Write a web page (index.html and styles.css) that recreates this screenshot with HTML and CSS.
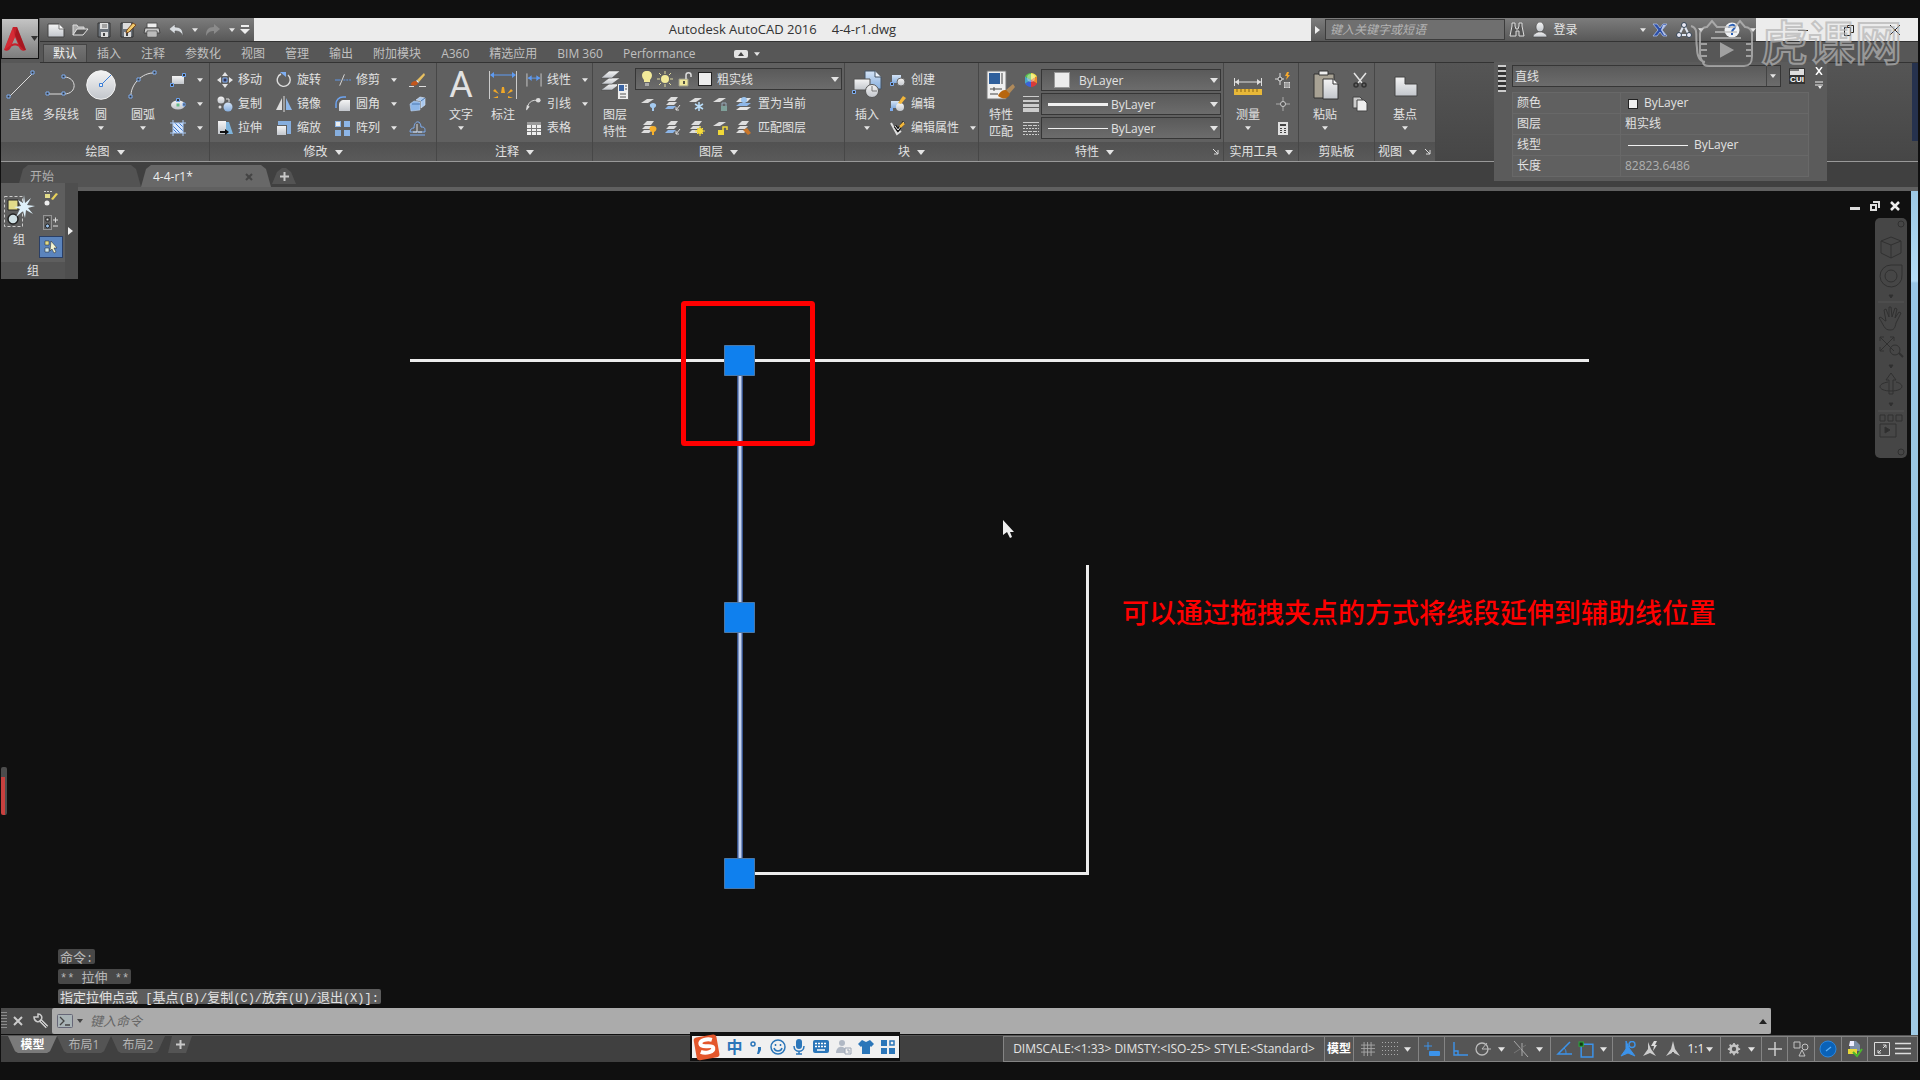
FILE: index.html
```html
<!DOCTYPE html>
<html lang="zh-CN">
<head>
<meta charset="utf-8">
<title>Autodesk AutoCAD 2016 - 4-4-r1.dwg</title>
<link rel="stylesheet" href="styles.css">
</head>
<body>
<svg class="sprite" aria-hidden="true">
  <defs>
    <linearGradient id="gl" x1="0" y1="0" x2="0" y2="1"><stop offset="0" stop-color="#f4f4f4"/><stop offset="1" stop-color="#c2c6cc"/></linearGradient>
    <linearGradient id="gb" x1="0" y1="0" x2="0" y2="1"><stop offset="0" stop-color="#d5e4f6"/><stop offset="1" stop-color="#86aede"/></linearGradient>
  </defs>
  <symbol id="down" viewBox="0 0 8 5"><path d="M0 0h8L4 5z" fill="#e4e4e4"/></symbol>
  <symbol id="new" viewBox="0 0 18 16"><path d="M1 2h11l5 5v8H1z" fill="url(#gl)" stroke="#444"/><path d="M12 2v5h5" fill="#fff" stroke="#777"/></symbol>
  <symbol id="open" viewBox="0 0 18 16"><path d="M2 13V3h4l1 2h6v3" fill="#aaa" stroke="#ddd"/><path d="M2 13 6 7h11l-5 6z" fill="#555" stroke="#e4e4e4"/></symbol>
  <symbol id="save" viewBox="0 0 16 16"><path d="M2 1h12v14H2z" fill="#6d747c" stroke="#333"/><path d="M4 1h8v6H4zM5 10h7v5H5z" fill="#ddd"/><path d="M6 3h5M6 5h5" stroke="#666"/><path d="M7 11h2v3H7z" fill="#444"/></symbol>
  <symbol id="saveas" viewBox="0 0 18 16"><path d="M2 1h12v14H2z" fill="#6d747c" stroke="#333"/><path d="M4 1h8v6H4zM5 10h7v5H5z" fill="#ddd"/><path d="M7 11h2v3H7z" fill="#444"/><path d="m7 11 1-3 6-7 3 2-7 7z" fill="#f0c96a" stroke="#7a4a20"/></symbol>
  <symbol id="print" viewBox="0 0 18 16"><path d="M4 1h10v5H4z" fill="#eee" stroke="#555"/><path d="M2 6h14l1 5H1z" fill="#c8c8c8" stroke="#444"/><path d="M4 9h10v6H4z" fill="#eee" stroke="#555"/><path d="M5 11h8M5 13h8" stroke="#888"/></symbol>
  <symbol id="undo" viewBox="0 0 16 14"><path d="m1 6 6-5v3c6 0 8 3 8 9-2-4-4-5-8-5v3z" fill="#d8dce0" stroke="#555" stroke-width=".6"/></symbol>
  <symbol id="redo" viewBox="0 0 16 14"><path d="M15 6 9 1v3C3 4 1 7 1 13c2-4 4-5 8-5v3z" fill="#8b8b8b"/></symbol>
  <symbol id="qcust" viewBox="0 0 10 9"><path d="M1 0h8v2H1zM0 4h10L5 9z" fill="#eee"/></symbol>
  <symbol id="applogo" viewBox="0 0 24 26"><path d="M1 24 10 1h4l9 23c-3 2-6 0-7-3-2-2-6-2-8 0-1 3-4 5-7 3z" fill="#c5202b"/><path d="M12 11l3 7c-2-1-4-1-6 0z" fill="#9a9a9a"/><path d="m10 1 2 10-4 8-7 5z" fill="#e0343c" opacity=".6"/><path d="m14 1-2 8 5 11 4 4 2 0z" fill="#8e1018" opacity=".55"/></symbol>
  <symbol id="bino" viewBox="0 0 16 16"><path d="M1 14 3 4V1h3v3l1 3h2l1-3V1h3v3l2 10h-5V9H7v5z" fill="#555" stroke="#ddd"/></symbol>
  <symbol id="user" viewBox="0 0 16 16"><ellipse cx="8" cy="5" rx="4" ry="5" fill="url(#gl)" stroke="#444" stroke-width=".6"/><path d="M1 15c0-3 3-4 5-5h4c2 1 5 2 5 5z" fill="url(#gl)" stroke="#444" stroke-width=".6"/></symbol>
  <symbol id="xch" viewBox="0 0 16 16"><path d="M1 2h4l3 4 3-4h4l-5 6 5 6h-4l-3-4-3 4H1l5-6z" fill="#2c4fa8" stroke="#a9bce8" stroke-width=".8"/><path d="M11 3h3l-4 5 4 5h-2L9 8z" fill="#b9c8ec"/></symbol>
  <symbol id="a360" viewBox="0 0 16 16"><path d="M8 3 3 13h10z" fill="none" stroke="#dfe6f2" stroke-width="2"/><circle cx="8" cy="3" r="2.500" fill="#e8e8f4" stroke="#345"/><circle cx="3" cy="13" r="2.500" fill="#e8e8f4" stroke="#345"/><circle cx="13" cy="13" r="2.500" fill="#e8e8f4" stroke="#345"/></symbol>
  <symbol id="help" viewBox="0 0 16 16"><circle cx="8" cy="8" r="7.500" fill="#f0f2f5"/><path d="M5 6c0-4 6-4 6-1 0 2-3 2-3 5" fill="none" stroke="#2a5fb4" stroke-width="2"/><path d="M7 11h2v2H7z" fill="#2a5fb4"/></symbol>
  <symbol id="line" viewBox="0 0 30 30"><path d="M3 27 27 3" stroke="#ddd"/><g fill="#333" stroke="#7eaef2"><path d="M1 25h3v3H1zM25 1h3v3h-3z"/></g></symbol>
  <symbol id="pline" viewBox="0 0 32 30"><path d="M3 24h16c14 0 13-17 0-17" fill="none" stroke="#ddd"/><g fill="#333" stroke="#7eaef2"><path d="M1 22h3v3H1zM17 22h3v3h-3zM17 5h3v3h-3z"/></g></symbol>
  <symbol id="circle" viewBox="0 0 30 30"><circle cx="15" cy="15" r="14.300" fill="url(#gl)" stroke="#f2f2f2"/><path d="M15 15 25 5" stroke="#3c7fd8"/><path d="M13.500 13.500h3v3h-3z" fill="#eee" stroke="#3c7fd8"/></symbol>
  <symbol id="arc" viewBox="0 0 30 30"><path d="M3 27C2 15 14 2 27 3" fill="none" stroke="#ddd"/><g fill="#333" stroke="#7eaef2"><path d="M1 25h3v3H1zM9 8h3v3H9zM25 1h3v3h-3z"/></g></symbol>
  <symbol id="rect" viewBox="0 0 16 16"><path d="M2 4h12v8H2z" fill="url(#gl)"/><g fill="#333" stroke="#6ea4f0"><path d="M.5 11.500h3v3h-3zM12.500 1.500h3v3h-3z"/></g></symbol>
  <symbol id="ellipse" viewBox="0 0 16 16"><ellipse cx="8" cy="9" rx="7" ry="4.500" fill="url(#gl)"/><path d="M6.500 7.500h3v3h-3z" fill="#6b8"/><g fill="#333" stroke="#6ea4f0"><path d="M6.500 2.500h3v3h-3zM13 7h2v3h-2z"/></g></symbol>
  <symbol id="hatch" viewBox="0 0 16 16"><path d="M3 3h10v10H3z" fill="#d8e6fa"/><path d="m3 6 7 7M3 9l4 4M5 3l8 8M9 3l4 4" stroke="#3c78d0"/><path d="M0 3h16M0 13h16M3 0v16M13 0v16" stroke="#a8c8f4"/></symbol>
  <symbol id="move" viewBox="0 0 16 16"><path d="m8 0 3 4H5zM8 16l3-4H5zM0 8l4-3v6zM16 8l-4-3v6z" fill="#e4e4e4"/><path d="M6 6h4v4H6z" fill="#335" stroke="#7eaef2"/></symbol>
  <symbol id="rotate" viewBox="0 0 16 16"><path d="M12 3a6.500 6.500 0 1 1-7-1" fill="none" stroke="#ddd" stroke-width="1.400"/><path d="M4 0h6v5z" fill="#7eaef2"/></symbol>
  <symbol id="trim" viewBox="0 0 17 16"><path d="M0 8h6" stroke="#5e9bf2"/><path d="M9 8h8" stroke="#5e9bf2" stroke-dasharray="2 1"/><path d="M5 14 10 2" stroke="#ddd"/></symbol>
  <symbol id="erase" viewBox="0 0 17 16"><path d="m8 8 7-7 1 2-6 7z" fill="#e8c060"/><path d="m8 8 2 2-1 1-2-2z" fill="#eee"/><path d="M2 13c0-3 2-4 5-4l2 2c-1 3-4 3-7 2z" fill="#c4571c"/><path d="M0 14.500h5M10 14.500h7" stroke="#ddd"/></symbol>
  <symbol id="copy" viewBox="0 0 16 16"><circle cx="4" cy="4" r="3.500" fill="url(#gl)"/><circle cx="11" cy="11" r="4.500" fill="url(#gb)"/><circle cx="3" cy="11" r="1.500" fill="#ddd"/><path d="M9 3h3v3" fill="none" stroke="#ddd"/></symbol>
  <symbol id="mirror" viewBox="0 0 16 16"><path d="M6 2v12H0z" fill="#ddd"/><path d="M10 2v12h6z" fill="#8db6e8"/><path d="M8 0v16" stroke="#ddd"/></symbol>
  <symbol id="fillet" viewBox="0 0 16 16"><path d="M4 15V9c0-3 2-5 5-5h6v11z" fill="url(#gl)"/><path d="M1 12V8c0-4 3-7 7-7h3" fill="none" stroke="#6ea4f0" stroke-width="1.500"/></symbol>
  <symbol id="explode" viewBox="0 0 17 16"><path d="m1 8 4-3 6 1v8l-9 1z" fill="#8db6e8" stroke="#bcd4f2" stroke-width=".6"/><path d="m7 4 4-3 5 1v7l-4 3V5z" fill="#a9c8ee" stroke="#dce8f8" stroke-width=".6"/><path d="M3 8h8M12 5l4-3" stroke="#4c78b0"/></symbol>
  <symbol id="stretch" viewBox="0 0 16 16"><path d="M1 1h8v13H1z" fill="url(#gl)"/><path d="M9 2h3l4 12H9z" fill="#7fb4dc"/><path d="M3 11h5V9l4 3-4 3v-2H3z" fill="#111"/></symbol>
  <symbol id="scale" viewBox="0 0 16 16"><path d="M2 1h13v13h-4V5H2z" fill="#86aede"/><path d="M1 6h9v9H1z" fill="url(#gl)"/></symbol>
  <symbol id="array" viewBox="0 0 16 16"><path d="M0 1h6v6H0zM9 1h6v6H9zM9 10h6v6H9z" fill="#8db6e8"/><path d="M0 10h6v6H0z" fill="#86aede"/><path d="M1 2h4v4H1z" fill="#eee"/></symbol>
  <symbol id="offset" viewBox="0 0 17 16"><path d="M1 12c0-3 2-4 4-4 0-8 7-8 7-1 4 0 4 1 4 5z" fill="none" stroke="#7eaef2"/><path d="M4 12h4V4m1 8h4" fill="none" stroke="#ddd"/><path d="M1 15h15" stroke="#7eaef2"/></symbol>
  <symbol id="dim" viewBox="0 0 30 30"><path d="M1.500 1v28M28.500 1v28" stroke="#ccc"/><path d="M3 5h24" stroke="#5e9bf2"/><path d="m2 5 4-3v6zM28 5l-4-3v6z" fill="#5e9bf2"/><g fill="#f0a828"><path d="m14 17 2 0 1 6h-4zM5 21l2-2 4 5zM25 21l-2-2-4 5zM5 28l5-2v2zM25 28l-5-2v2z"/></g></symbol>
  <symbol id="linear" viewBox="0 0 17 16"><path d="M1 1v14M16 1v14" stroke="#ccc"/><path d="M2 6h13" stroke="#5e9bf2"/><path d="m2 6 4-3v6zM15 6l-4-3v6z" fill="#5e9bf2"/></symbol>
  <symbol id="leader" viewBox="0 0 17 16"><path d="M1 14C2 6 6 4 11 4" fill="none" stroke="#ddd"/><path d="M0 15 1 9l3 2z" fill="#ddd"/><circle cx="13" cy="4" r="2.500" fill="#ddd"/></symbol>
  <symbol id="table" viewBox="0 0 16 16"><path d="M1 2h14v13H1z" fill="#eee"/><path d="M1 2h14v3H1z" fill="#9a9a9a"/><path d="M1 8.500h14M1 11.500h14M5.500 5v10M10.500 5v10" stroke="#777"/></symbol>
  <symbol id="layerprop" viewBox="0 0 30 30"><g fill="url(#gl)" stroke="#444" stroke-width=".5"><path d="m1 20 8-6h11l-8 6z"/><path d="m1 14 8-6h11l-8 6z"/><path d="m1 8 8-7h11l-8 7z"/></g><path d="M17.500 13.500h11v16h-11z" fill="#eee" stroke="#666"/><path d="M19 15h5v6h-5z" fill="#3a64a4"/><path d="M25 16h2M25 19h2M20 24h6M20 27h6" stroke="#555"/></symbol>
  <symbol id="bulb" viewBox="0 0 10 16"><path d="M5 0c6 0 6 6 3 9v2H2V9C-1 6-1 0 5 0z" fill="#f2ea9a"/><path d="M3 12h4v3H3z" fill="#aaa"/></symbol>
  <symbol id="sun" viewBox="0 0 16 16"><circle cx="8" cy="8" r="4" fill="#f2ea9a"/><path d="M8 0v3M8 13v3M0 8h3M13 8h3M2 2l2 2M12 12l2 2M14 2l-2 2M4 12l-2 2" stroke="#e0dca0"/></symbol>
  <symbol id="unlock" viewBox="0 0 15 16"><path d="M1 8h9v7H1z" fill="#efe79a" stroke="#998"/><path d="M8 8V4c0-3 5-3 5 0v2" fill="none" stroke="#ddd" stroke-width="1.500"/><path d="M5 10h2v3H5z" fill="#554"/></symbol>
  <symbol id="ly1" viewBox="0 0 18 16"><path d="m1 7 6-4h7l-6 4z" fill="#ddd"/><path d="M13 7c4 0 4 4 1 5v3h-2v-3c-3-1-3-5 1-5z" fill="#a4caf0"/></symbol>
  <symbol id="ly2" viewBox="0 0 18 16"><g fill="#ddd"><path d="m3 5 4-4h7l-3 4zM2 9l3-3h8l-3 3z"/></g><path d="m1 13 3-3h8l-3 3z" fill="#8db6e8"/><path d="m16 9-4 5m0-3v3h3" fill="none" stroke="#ddd"/></symbol>
  <symbol id="ly3" viewBox="0 0 18 16"><path d="m1 6 6-4h7l-6 4z" fill="#ddd"/><path d="M11 6v9M7 8l8 5M15 8l-8 5" stroke="#b8dcf8" stroke-width="1.500"/></symbol>
  <symbol id="ly4" viewBox="0 0 18 16"><path d="m1 6 6-4h7l-6 4z" fill="#ddd"/><path d="M9 10h6v5H9z" fill="#7fa09a"/><path d="M10 10V7h4v3" fill="none" stroke="#9ab"/></symbol>
  <symbol id="ly5" viewBox="0 0 18 16"><g fill="#e4e4e4"><path d="m1 14 4-3h11l-4 3z"/><path d="m1 6 4-4h11l-4 4z"/></g><path d="m1 10 4-3h11l-4 3z" fill="#8db6e8"/><circle cx="9" cy="4" r="3" fill="#9cc4ee"/></symbol>
  <symbol id="ly6" viewBox="0 0 18 16"><g fill="#ddd"><path d="m3 5 4-4h7l-3 4zM2 9l3-3h8l-3 3zM1 13l3-3h8l-3 3z"/></g><path d="M13 6c5 0 4 5 1 6v3h-2v-3c-3-1-4-6 1-6z" fill="#f5b02c"/></symbol>
  <symbol id="ly7" viewBox="0 0 18 16"><g fill="#ddd"><path d="m3 5 4-4h7l-3 4zM2 9l3-3h8l-3 3zM1 13l3-3h8l-3 3z"/></g><circle cx="12" cy="11" r="3" fill="#f8dc38"/><path d="M12 6v10M7 11h10M9 8l6 6M15 8l-6 6" stroke="#f8dc38"/></symbol>
  <symbol id="ly8" viewBox="0 0 18 16"><path d="m1 6 6-4h7l-6 4z" fill="#ddd"/><path d="M6 10h6v5H6z" fill="#f0d838"/><path d="M11 10V7h4v3" fill="none" stroke="#f0d838" stroke-width="1.500"/></symbol>
  <symbol id="ly9" viewBox="0 0 18 16"><g fill="#ddd"><path d="m3 5 4-4h7l-3 4zM2 9l3-3h8l-3 3zM1 13l3-3h8l-3 3z"/></g><path d="m8 10 4-2 4 5-3 2z" fill="#c8762a"/></symbol>
  <symbol id="insert" viewBox="0 0 30 30"><path d="M13 1h10l6 6v12H13z" fill="url(#gb)" stroke="#456"/><path d="M23 1v6h6" fill="#eef4fc" stroke="#456"/><path d="M2 9h16v11H2z" fill="url(#gl)" stroke="#555"/><circle cx="20" cy="21" r="6.500" fill="url(#gl)" stroke="#555"/><path d="M20 16v5h5" fill="none" stroke="#777"/><path d="M.500 20.500h3v3h-3z" fill="#333" stroke="#7eaef2"/></symbol>
  <symbol id="bcreate" viewBox="0 0 16 16"><path d="M2 3h9v8H2z" fill="url(#gb)"/><circle cx="11" cy="10" r="4" fill="url(#gl)" stroke="#666"/><path d="M.500 10.500h3v3h-3z" fill="#333" stroke="#7eaef2"/></symbol>
  <symbol id="bedit" viewBox="0 0 16 16"><path d="M1 5h8v7H1z" fill="url(#gb)"/><circle cx="10" cy="11" r="4" fill="url(#gl)"/><path d="m8 7 5-7 3 2-5 6z" fill="#f2b63a"/><path d="M0 12h3v3H0z" fill="#7eaef2"/></symbol>
  <symbol id="battr" viewBox="0 0 16 16"><path d="m1 3 6 11 4-3" fill="none" stroke="#ddd" stroke-width="2"/><path d="m5 6 3 4 6-8" fill="none" stroke="#111" stroke-width="3"/><path d="m5 6 3 4 6-8" fill="none" stroke="#eee"/><path d="m9 6 4-4 2 2-4 4z" fill="#f2b63a"/></symbol>
  <symbol id="matchp" viewBox="0 0 30 30"><path d="M1 1h19v28H1z" fill="#f0f0f0" stroke="#777"/><path d="M3 3h11v11H3z" fill="#2f5f9c"/><path d="M16 3v11M4 19h12M4 24h8M8 17v4" stroke="#444"/><path d="m20 20 7-6 2 3-6 7z" fill="#b08a5a"/><path d="M12 26c2-5 5-6 8-6l4 4c-2 5-7 6-12 2z" fill="#b8660e"/></symbol>
  <symbol id="wheel" viewBox="0 0 16 16"><g><path d="M8 8V1a7 7 0 0 1 6 3.500z" fill="#f0e24a"/><path d="m8 8 6-3.500v7z" fill="#f08a2c"/><path d="m8 8 6 3.500A7 7 0 0 1 8 15z" fill="#d83a3a"/><path d="M8 8v7a7 7 0 0 1-6-3.500z" fill="#3a62d8"/><path d="m8 8-6 3.500v-7z" fill="#48a8c8"/><path d="M8 8 2 4.500A7 7 0 0 1 8 1z" fill="#58c048"/></g><circle cx="8" cy="6" r="4" fill="#fff" opacity=".35"/></symbol>
  <symbol id="lweight" viewBox="0 0 16 16"><path d="M0 0h16v1H0zM0 4h16v2H0zM0 8h16v3H0zM0 12h16v4H0z" fill="#ccc"/></symbol>
  <symbol id="ltype" viewBox="0 0 16 16"><path d="M0 2.500h16" stroke="#ccc"/><path d="M0 5.500h16M0 11.500h16" stroke="#ccc" stroke-dasharray="4 1"/><path d="M0 8.500h16M0 14.500h16" stroke="#ccc" stroke-dasharray="2 1"/></symbol>
  <symbol id="measure" viewBox="0 0 30 30"><path d="M1.500 8v8M28.500 8v8M2 12h26" stroke="#ddd"/><path d="m2 12 4-3v6zM28 12l-4-3v6z" fill="#ddd"/><path d="M1 19h28v6H1z" fill="#e8b838"/><path d="M4 19v3M8 19v3M12 19v3M16 19v3M20 19v3M24 19v3" stroke="#8a6410"/></symbol>
  <symbol id="qsel" viewBox="0 0 16 16"><path d="M5 1v12M0 7h9" stroke="#ddd"/><circle cx="5" cy="7" r="2" fill="#444" stroke="#ddd"/><path d="m12 0-2 4h2l-1 4 4-5h-2l1-3z" fill="#f5a82c"/><path d="M9 10h6v6H9z" fill="#ddd"/><path d="M9 12h6M9 14h6M11 10v6M13 10v6" stroke="#444" stroke-width=".5"/></symbol>
  <symbol id="point" viewBox="0 0 16 16"><path d="M8 1v14M1 8h14" stroke="#aaa"/><circle cx="8" cy="8" r="2.500" fill="#555" stroke="#ccc"/></symbol>
  <symbol id="calc" viewBox="0 0 16 16"><path d="M3 2h10v13H3z" fill="#e0e0e0"/><path d="M5 4h6v2H5z" fill="#444"/><path d="M5 8h2v1H5zM9 8h2v1H9zM5 10h2v1H5zM9 10h2v1H9zM5 12h2v1H5zM9 12h2v1H9z" fill="#444"/></symbol>
  <symbol id="paste" viewBox="0 0 30 30"><path d="M4 4h20v24H4z" fill="#a8a294" stroke="#333"/><path d="M9 1h9v4H9z" fill="#eee" stroke="#333"/><path d="M13 9h10l5 5v15H13z" fill="url(#gl)" stroke="#333"/><path d="M23 9v5h5" fill="#fff" stroke="#333"/></symbol>
  <symbol id="cut" viewBox="0 0 16 16"><path d="m2 1 8 10M14 1 6 11" stroke="#e4e4e4" stroke-width="1.500"/><circle cx="4" cy="13" r="2" fill="none" stroke="#333" stroke-width="1.500"/><circle cx="12" cy="13" r="2" fill="none" stroke="#333" stroke-width="1.500"/></symbol>
  <symbol id="clip" viewBox="0 0 16 16"><path d="M1 1h7l2 2v9H1z" fill="#ccc" stroke="#444"/><path d="M5 4h7l3 3v8H5z" fill="#eee" stroke="#444"/></symbol>
  <symbol id="base" viewBox="0 0 30 30"><path d="M5 7h10v7h12v12H5z" fill="url(#gl)" stroke="#444"/></symbol>
  <symbol id="group" viewBox="0 0 32 32"><path d="M1.500 1.500h18v30h-18z" fill="none" stroke="#ccc" stroke-dasharray="3 2"/><path d="M5 5h10v10H5z" fill="#e2dc8a" stroke="#222"/><circle cx="10" cy="24" r="5" fill="#cfe0e4" stroke="#222" stroke-width="1.500"/><path d="m21 0 1 8 6-5-4 7 8 1-7 2 5 6-7-4-1 8-2-7-7 6 4-8-6-2 7-1-3-6 5 3z" fill="#dff1fb"/></symbol>
  <symbol id="gedit" viewBox="0 0 16 16"><path d="M1 .500h8" stroke="#ccc" stroke-dasharray="2 1"/><path d="M2 3h5v4H2z" fill="#e2dc8a"/><circle cx="4" cy="12" r="2.500" fill="#eee"/><path d="m8 8 5-6 2 1-5 6z" fill="#e8d25a"/></symbol>
  <symbol id="gadd" viewBox="0 0 16 16"><path d="M.500.500h8v14h-8z" fill="none" stroke="#ccc" stroke-dasharray="1 1"/><path d="M3 3h3v3H3z" fill="#ddd" stroke="#222"/><circle cx="4.500" cy="11" r="2" fill="#9cc4ee" stroke="#222"/><path d="M10 5h5M12.500 2.500v5M10 11h5" stroke="#ddd"/></symbol>
  <symbol id="gsel" viewBox="0 0 16 16"><path d="M2 2h4v4H2z" fill="#e2dc8a" stroke="#222" stroke-width=".5"/><path d="M2 9h4v4H2z" fill="#cfe8ee" stroke="#222" stroke-width=".5"/><path d="m8 2 6 7-3 0 2 4-2 1-2-4-2 2z" fill="#f4f4d0" stroke="#222" stroke-width=".5"/></symbol>
  <symbol id="wrench" viewBox="0 0 16 16"><path d="m7 7 7 7" stroke="#ccc" stroke-width="3.500"/><path d="m7 7 7 7" stroke="#555"/><path d="M1 4c0 5 5 6 7 3 2-3 0-6-3-6v3H3z" fill="none" stroke="#ccc" stroke-width="1.500"/></symbol>
  <symbol id="prompt" viewBox="0 0 16 14"><rect x=".5" y=".5" width="15" height="13" rx="1" fill="#a9b3b6" stroke="#667"/><path d="m3 3 4 4-4 4M8 11h5" fill="none" stroke="#444" stroke-width="1.300"/></symbol>
  <symbol id="gridi" viewBox="0 0 16 16"><path d="M3.500 0v16M7.500 0v16M11.500 0v16M0 3.500h16M0 7.500h16M0 11.500h16" stroke="#aaa"/></symbol>
  <symbol id="snapi" viewBox="0 0 16 16"><path d="M0 1.500h16M0 5.500h16M0 9.500h16M0 13.500h16" stroke="#aaa" stroke-dasharray="1 2"/></symbol>
  <symbol id="dyn" viewBox="0 0 18 16"><path d="M5 1v8M1 5h8" stroke="#3c93ea"/><rect x="6" y="10" width="11" height="5" rx="1" fill="#3c93ea"/></symbol>
  <symbol id="ortho" viewBox="0 0 16 16"><path d="M2 1v13h14M2 10h4v4" fill="none" stroke="#3c93ea" stroke-width="1.400"/></symbol>
  <symbol id="polar" viewBox="0 0 16 16"><circle cx="7" cy="8" r="6" fill="none" stroke="#bbb" stroke-width="1.300"/><path d="M7 8h9M7 8l5-6" stroke="#bbb"/></symbol>
  <symbol id="iso" viewBox="0 0 16 16"><path d="m1 0 14 16M9 2v13" stroke="#aaa"/><path d="m1 12 12-8" stroke="#777"/></symbol>
  <symbol id="angle" viewBox="0 0 16 16"><path d="M14 1 2 13h14" fill="none" stroke="#3c93ea" stroke-width="1.500"/><path d="M8 7c2 2 2 3 2 6" fill="none" stroke="#3c93ea"/></symbol>
  <symbol id="osnap" viewBox="0 0 16 16"><path d="M3 3h11v12H3z" fill="none" stroke="#3c93ea" stroke-width="1.400"/><path d="M1 1h4v4H1z" fill="#113811" stroke="#2ca83c"/></symbol>
  <symbol id="anno" viewBox="0 0 16 16"><path d="m8 0 2 8 5 7-6-3v-1H7v1l-6 3 5-7z" fill="currentColor"/></symbol>
  <symbol id="annov" viewBox="0 0 16 16"><path d="m6 0 3 7 6 8-7-3-7 3 5-7z" fill="currentColor" stroke="currentColor"/><circle cx="12" cy="3.500" r="3" fill="#555" stroke="currentColor" stroke-width="1.500"/></symbol>
  <symbol id="annoa" viewBox="0 0 16 16"><path d="m6 1 3 7 5 7-6-3-7 3 5-7z" fill="currentColor"/><path d="m12 0-3 5h3l-1 5 4-6h-2l2-4z" fill="#ddd"/></symbol>
  <symbol id="gear" viewBox="0 0 16 16"><circle cx="8" cy="8" r="4" fill="none" stroke="#c4c4c4" stroke-width="3"/><path d="M8 1v3M8 12v3M1 8h3M12 8h3M3 3l2 2M11 11l2 2M13 3l-2 2M5 11l-2 2" stroke="#c4c4c4" stroke-width="2"/></symbol>
  <symbol id="plus" viewBox="0 0 16 16"><path d="M8 1v14M1 8h14" stroke="#ccc" stroke-width="1.500"/></symbol>
  <symbol id="iso2" viewBox="0 0 16 16"><path d="M1 1h6v6H1zM6 15l3-6 3 6z" fill="none" stroke="#c4c4c4"/><circle cx="12" cy="6" r="3" fill="none" stroke="#c4c4c4"/></symbol>
  <symbol id="hw" viewBox="0 0 18 18"><circle cx="9" cy="9" r="8" fill="#0a62b8" stroke="#2c86dc"/><path d="m7 11 5-4" stroke="#5ab0f8" stroke-width="1.300"/></symbol>
  <symbol id="trust" viewBox="0 0 16 18"><path d="M3 1h6l4 4v6H3z" fill="#7c8fa8"/><path d="M1 9h9v5H1z" fill="#e8d838"/><path d="M3 1h4v5H2z" fill="#eef"/><path d="m6 12 4 4 5-7" fill="none" stroke="#4cb82c" stroke-width="2"/></symbol>
  <symbol id="full" viewBox="0 0 16 14"><path d="M.500.500h15v13H.500z" fill="none" stroke="#ddd"/><path d="m9 6 3-3M9 3h3v3M7 8l-3 3M4 8v3h3" fill="none" stroke="#ddd"/></symbol>
  <symbol id="burger" viewBox="0 0 16 14"><path d="M0 1.500h16M0 6.500h16M0 11.500h16" stroke="#ddd" stroke-width="1.500"/></symbol>
</svg>

<div class="app">
  <header class="top">
    <button class="appbtn" aria-label="应用程序菜单"><svg width="24" height="26"><use href="#applogo"/></svg><svg width="7" height="5"><path d="M0 0h7L3.500 5z" fill="#333"/></svg></button>
    <div class="titlebar">
      <div class="qat">
        <button aria-label="新建"><svg width="18" height="16"><use href="#new"/></svg></button>
        <button aria-label="打开"><svg width="18" height="16"><use href="#open"/></svg></button>
        <button aria-label="保存"><svg width="16" height="16"><use href="#save"/></svg></button>
        <button aria-label="另存为"><svg width="18" height="16"><use href="#saveas"/></svg></button>
        <button aria-label="打印"><svg width="18" height="16"><use href="#print"/></svg></button>
        <button aria-label="放弃"><svg width="16" height="14"><use href="#undo"/></svg></button>
        <button class="slim" aria-label="放弃列表"><svg width="6" height="4"><use href="#down"/></svg></button>
        <button aria-label="重做"><svg width="16" height="14"><use href="#redo"/></svg></button>
        <button class="slim" aria-label="重做列表"><svg width="6" height="4"><use href="#down"/></svg></button>
        <button class="slim" aria-label="自定义"><svg width="10" height="9"><use href="#qcust"/></svg></button>
      </div>
      <h1 class="title"><span>Autodesk AutoCAD 2016</span><span>4-4-r1.dwg</span></h1>
      <div class="info">
        <button class="expand" aria-label="展开"><svg width="5" height="8"><path d="M0 0v8l5-4z" fill="#eee"/></svg></button>
        <input class="search" type="text" placeholder="键入关键字或短语" aria-label="搜索">
        <button class="i24" aria-label="搜索"><svg width="16" height="16"><use href="#bino"/></svg></button>
        <button class="login"><svg width="16" height="16"><use href="#user"/></svg>登录<svg class="end" width="6" height="4"><use href="#down"/></svg></button>
        <button class="i24" aria-label="Exchange"><svg width="16" height="16"><use href="#xch"/></svg></button>
        <button class="i24" aria-label="A360"><svg width="16" height="16"><use href="#a360"/></svg></button>
        <svg class="a1" width="6" height="4"><use href="#down"/></svg>
        <button class="i24 help" aria-label="帮助"><svg width="16" height="16"><use href="#help"/></svg></button>
        <svg width="6" height="4"><use href="#down"/></svg>
      </div>
      <div class="winctl">
        <button aria-label="最小化"><svg width="12" height="12"><path d="M1 6.500h10" stroke="#222"/></svg></button>
        <button aria-label="还原"><svg width="12" height="12"><path d="M1.500 3.500h6v8h-6zM4.500 3V1.500h6v7H8" fill="none" stroke="#222"/></svg></button>
        <button aria-label="关闭"><svg width="12" height="12"><path d="m1 1 10 10M11 1 1 11" stroke="#222"/></svg></button>
      </div>
    </div>
    <nav class="tabs">
      <button class="on">默认</button><button>插入</button><button>注释</button><button>参数化</button><button>视图</button><button>管理</button><button>输出</button><button>附加模块</button><button>A360</button><button>精选应用</button><button>BIM 360</button><button>Performance</button>
      <button class="mini" aria-label="最小化功能区"><svg width="14" height="8"><rect width="14" height="8" rx="2" fill="#e4e4e4"/><path d="M4 6h6L7 2z" fill="#444"/></svg><svg width="6" height="4"><use href="#down"/></svg></button>
    </nav>
  </header>

  <div class="ribbon">
    <section class="panel p-draw">
      <div class="body">
        <button class="big"><svg width="30" height="30"><use href="#line"/></svg>直线</button>
        <button class="big"><svg width="32" height="30"><use href="#pline"/></svg>多段线</button>
        <button class="big"><svg width="30" height="30"><use href="#circle"/></svg>圆<svg class="dd" width="6" height="4"><use href="#down"/></svg></button>
        <button class="big wide"><svg width="30" height="30"><use href="#arc"/></svg>圆弧<svg class="dd" width="6" height="4"><use href="#down"/></svg></button>
        <div class="stack">
          <button class="sm" aria-label="矩形"><svg width="16" height="16"><use href="#rect"/></svg><svg class="arr" width="6" height="4"><use href="#down"/></svg></button>
          <button class="sm" aria-label="椭圆"><svg width="16" height="16"><use href="#ellipse"/></svg><svg class="arr" width="6" height="4"><use href="#down"/></svg></button>
          <button class="sm" aria-label="图案填充"><svg width="16" height="16"><use href="#hatch"/></svg><svg class="arr" width="6" height="4"><use href="#down"/></svg></button>
        </div>
      </div>
      <button class="ptitle">绘图<svg width="8" height="5"><use href="#down"/></svg></button>
    </section>
    <section class="panel p-modify">
      <div class="body">
        <div class="stack c59">
          <button class="sm"><svg width="16" height="16"><use href="#move"/></svg>移动</button>
          <button class="sm"><svg width="16" height="16"><use href="#copy"/></svg>复制</button>
          <button class="sm"><svg width="16" height="16"><use href="#stretch"/></svg>拉伸</button>
        </div>
        <div class="stack c59">
          <button class="sm"><svg width="16" height="16"><use href="#rotate"/></svg>旋转</button>
          <button class="sm"><svg width="16" height="16"><use href="#mirror"/></svg>镜像</button>
          <button class="sm"><svg width="16" height="16"><use href="#scale"/></svg>缩放</button>
        </div>
        <div class="stack c74">
          <button class="sm"><svg width="16" height="16"><use href="#trim"/></svg>修剪<svg class="arr" width="6" height="4"><use href="#down"/></svg></button>
          <button class="sm"><svg width="16" height="16"><use href="#fillet"/></svg>圆角<svg class="arr" width="6" height="4"><use href="#down"/></svg></button>
          <button class="sm"><svg width="16" height="16"><use href="#array"/></svg>阵列<svg class="arr" width="6" height="4"><use href="#down"/></svg></button>
        </div>
        <div class="stack">
          <button class="sm" aria-label="删除"><svg width="17" height="16"><use href="#erase"/></svg></button>
          <button class="sm" aria-label="分解"><svg width="17" height="16"><use href="#explode"/></svg></button>
          <button class="sm" aria-label="偏移"><svg width="17" height="16"><use href="#offset"/></svg></button>
        </div>
      </div>
      <button class="ptitle">修改<svg width="8" height="5"><use href="#down"/></svg></button>
    </section>
    <section class="panel p-anno">
      <div class="body">
        <button class="big wide"><span class="bigA">A</span>文字<svg class="dd" width="6" height="4"><use href="#down"/></svg></button>
        <button class="big"><svg width="30" height="30"><use href="#dim"/></svg>标注</button>
        <div class="stack">
          <button class="sm"><svg width="16" height="16"><use href="#linear"/></svg>线性<svg class="arr" width="6" height="4"><use href="#down"/></svg></button>
          <button class="sm"><svg width="16" height="16"><use href="#leader"/></svg>引线<svg class="arr" width="6" height="4"><use href="#down"/></svg></button>
          <button class="sm"><svg width="16" height="16"><use href="#table"/></svg>表格</button>
        </div>
      </div>
      <button class="ptitle">注释<svg width="8" height="5"><use href="#down"/></svg></button>
    </section>
    <section class="panel p-layer">
      <div class="body">
        <button class="big"><svg width="30" height="30"><use href="#layerprop"/></svg>图层<br>特性</button>
        <div class="stack grow">
          <div class="combo"><svg width="10" height="16"><use href="#bulb"/></svg><svg width="16" height="16"><use href="#sun"/></svg><svg width="15" height="16"><use href="#unlock"/></svg><i class="swatch"></i><select aria-label="图层"><option>粗实线</option></select><svg width="8" height="5"><use href="#down"/></svg></div>
          <div class="lrow">
            <button aria-label="关"><svg width="18" height="16"><use href="#ly1"/></svg></button><button aria-label="隔离"><svg width="18" height="16"><use href="#ly2"/></svg></button><button aria-label="冻结"><svg width="18" height="16"><use href="#ly3"/></svg></button><button aria-label="锁定"><svg width="18" height="16"><use href="#ly4"/></svg></button><button class="txt"><svg width="18" height="16"><use href="#ly5"/></svg>置为当前</button>
          </div>
          <div class="lrow">
            <button aria-label="打开所有图层"><svg width="18" height="16"><use href="#ly6"/></svg></button><button aria-label="取消隔离"><svg width="18" height="16"><use href="#ly2"/></svg></button><button aria-label="解冻"><svg width="18" height="16"><use href="#ly7"/></svg></button><button aria-label="解锁"><svg width="18" height="16"><use href="#ly8"/></svg></button><button class="txt"><svg width="18" height="16"><use href="#ly9"/></svg>匹配图层</button>
          </div>
        </div>
      </div>
      <button class="ptitle">图层<svg width="8" height="5"><use href="#down"/></svg></button>
    </section>
    <section class="panel p-block">
      <div class="body">
        <button class="big"><svg width="30" height="30"><use href="#insert"/></svg>插入<svg class="dd" width="6" height="4"><use href="#down"/></svg></button>
        <div class="stack">
          <button class="sm"><svg width="16" height="16"><use href="#bcreate"/></svg>创建</button>
          <button class="sm"><svg width="16" height="16"><use href="#bedit"/></svg>编辑</button>
          <button class="sm"><svg width="16" height="16"><use href="#battr"/></svg>编辑属性<svg class="arr" width="6" height="4"><use href="#down"/></svg></button>
        </div>
      </div>
      <button class="ptitle">块<svg width="8" height="5"><use href="#down"/></svg></button>
    </section>
    <section class="panel p-prop">
      <div class="body">
        <button class="big"><svg width="30" height="30"><use href="#matchp"/></svg>特性<br>匹配</button>
        <div class="stack grow">
          <div class="prow"><svg width="16" height="16"><use href="#wheel"/></svg><div class="combo"><i class="swatch big-sw"></i><select aria-label="对象颜色"><option>ByLayer</option></select><svg width="8" height="5"><use href="#down"/></svg></div></div>
          <div class="prow"><svg width="16" height="16"><use href="#lweight"/></svg><div class="combo"><i class="rule thick"></i><select aria-label="线宽"><option>ByLayer</option></select><svg width="8" height="5"><use href="#down"/></svg></div></div>
          <div class="prow"><svg width="16" height="16"><use href="#ltype"/></svg><div class="combo"><i class="rule"></i><select aria-label="线型"><option>ByLayer</option></select><svg width="8" height="5"><use href="#down"/></svg></div></div>
        </div>
      </div>
      <button class="ptitle">特性<svg width="8" height="5"><use href="#down"/></svg><svg class="launch" width="6" height="6"><path d="m0 0 5 5M5 1v4H1" fill="none" stroke="#ddd"/></svg></button>
    </section>
    <section class="panel p-util">
      <div class="body">
        <button class="big wide"><svg width="30" height="30"><use href="#measure"/></svg>测量<svg class="dd" width="6" height="4"><use href="#down"/></svg></button>
        <div class="stack">
          <button class="sm" aria-label="快速选择"><svg width="16" height="16"><use href="#qsel"/></svg></button>
          <button class="sm" aria-label="点样式"><svg width="16" height="16"><use href="#point"/></svg></button>
          <button class="sm" aria-label="计算器"><svg width="16" height="16"><use href="#calc"/></svg></button>
        </div>
      </div>
      <button class="ptitle">实用工具<svg width="8" height="5"><use href="#down"/></svg></button>
    </section>
    <section class="panel p-clip">
      <div class="body">
        <button class="big wide"><svg width="30" height="30"><use href="#paste"/></svg>粘贴<svg class="dd" width="6" height="4"><use href="#down"/></svg></button>
        <div class="stack">
          <button class="sm" aria-label="剪切"><svg width="16" height="16"><use href="#cut"/></svg></button>
          <button class="sm" aria-label="复制剪裁"><svg width="16" height="16"><use href="#clip"/></svg></button>
        </div>
      </div>
      <button class="ptitle">剪贴板</button>
    </section>
    <section class="panel p-view">
      <div class="body">
        <button class="big wide"><svg width="30" height="30"><use href="#base"/></svg>基点<svg class="dd" width="6" height="4"><use href="#down"/></svg></button>
      </div>
      <button class="ptitle">视图<svg width="8" height="5"><use href="#down"/></svg><svg class="launch" width="6" height="6"><path d="m0 0 5 5M5 1v4H1" fill="none" stroke="#ddd"/></svg></button>
    </section>
    <div class="edge"></div>
  </div>

  <nav class="docs">
    <button class="doc start">开始</button>
    <button class="doc cur">4-4-r1*<svg width="8" height="8"><path d="m1 1 6 6M7 1 1 7" stroke="#444" stroke-width="2"/></svg></button>
    <button class="doc add" aria-label="新图形"><svg width="9" height="9"><path d="M4.500 0v9M0 4.500h9" stroke="#c8c8c8" stroke-width="2"/></svg></button>
  </nav>

  <main class="work">
    <svg class="drawing" width="100%" height="100%">
      <path d="M409 169.500H1588" stroke="#ececec" stroke-width="3"/>
      <path d="M739 682.500H1086.500V374" fill="none" stroke="#ececec" stroke-width="3"/>
      <path d="M739 169V682" stroke="#35528c" stroke-width="6"/>
      <path d="M739 169V682" stroke="#c6d4f2" stroke-width="3"/>
      <g fill="#0f80ee" stroke="#4a78a8"><path d="M723.500 154.500h30v30h-30zM723.500 411.500h30v30h-30zM723.500 667.500h30v30h-30z"/></g>
      <rect x="682.500" y="112.500" width="129" height="140" rx="1" fill="none" stroke="#f00" stroke-width="5"/>
      <path d="M1002 329v15l4-3 3 6 2-1-2-5h4z" fill="#eee"/>
    </svg>
    <p class="note">可以通过拖拽夹点的方式将线段延伸到辅助线位置</p>

    <div class="grouppal">
      <div class="gmain">
        <div class="gbody">
          <button class="gbig"><svg width="32" height="32"><use href="#group"/></svg>组</button>
          <div class="gcol">
            <button aria-label="组编辑"><svg width="16" height="16"><use href="#gedit"/></svg></button>
            <button aria-label="添加或删除"><svg width="16" height="16"><use href="#gadd"/></svg></button>
            <button class="sel" aria-label="组选择"><svg width="16" height="16"><use href="#gsel"/></svg></button>
          </div>
        </div>
        <div class="gtitle">组</div>
      </div>
      <button class="gside" aria-label="展开"><svg width="5" height="8"><path d="M0 0v8l5-4z" fill="#eee"/></svg></button>
    </div>

    <div class="docctl">
      <button aria-label="最小化"><svg width="10" height="10"><path d="M0 6h10v3H0z" fill="#ddd"/></svg></button>
      <button aria-label="还原"><svg width="10" height="10"><path d="M1 4h5v5H1zM3 1h6v6" fill="none" stroke="#ddd" stroke-width="2"/></svg></button>
      <button aria-label="关闭"><svg width="10" height="10"><path d="m1 1 8 8M9 1 1 9" stroke="#eee" stroke-width="2.500"/></svg></button>
    </div>
    <div class="navbar">
      <svg width="32" height="240" fill="none" stroke="#303030">
        <circle cx="26" cy="6" r="3"/>
        <path d="m6 23 10-4 10 4v12l-10 5-10-5zM6 23l10 4 10-4M16 27v13"/>
        <path d="M16 47h11v10a11 11 0 1 1-11-10z"/><circle cx="16" cy="58" r="6"/>
        <path d="m14 77 2 3 2-3z" fill="#2e2e2e"/>
        <path d="M5 99c3 1 4 4 6 4l-2-11 2-1 3 8V89h2l1 10 3-9 2 1-2 9 4-6 2 1-5 10c-1 5-2 7-6 7-6 0-6-5-11-12z"/>
        <path d="m5 119 14 14M19 119 5 133M5 123v-4h4M15 119h4v4M5 129v4h4"/><circle cx="20" cy="132" r="5"/><path d="m24 135 4 4" stroke-width="2"/>
        <path d="m14 147 2 3 2-3z" fill="#2e2e2e"/>
        <path d="M14 176v-14h-3l5-7 5 7h-3v14zM13 164c-12 2-10 9 3 9s14-7 5-9"/>
        <path d="m14 185 2 3 2-3z" fill="#2e2e2e"/>
        <path d="M5 197h5v6H5zM13 197h5v6h-5zM21 197h6v6h-6zM5 206h16v13H5z"/><path d="m10 209 5 3-5 3z" fill="#2e2e2e"/>
        <circle cx="26" cy="234" r="3"/>
        <path d="M3 84h26M3 193h26" stroke="#555"/>
      </svg>
    </div>
    <div class="meter"></div>
    <div class="scroll"></div>

    <div class="history">
      <p class="dim">命令<span>:</span></p>
      <p class="dim"><span>** </span>拉伸<span> **</span></p>
      <p>指定拉伸点或<span> [</span>基点<span>(B)/</span>复制<span>(C)/</span>放弃<span>(U)/</span>退出<span>(X)]:</span></p>
    </div>
    <div class="cmd">
      <i class="grip"></i>
      <button class="cx" aria-label="关闭"><svg width="10" height="10"><path d="m1 1 8 8M9 1 1 9" stroke="#ccc" stroke-width="2"/></svg></button>
      <button class="cw" aria-label="自定义"><svg width="16" height="16"><use href="#wrench"/></svg></button>
      <div class="cline">
        <svg width="16" height="14"><use href="#prompt"/></svg>
        <svg width="6" height="4"><path d="M0 0h6L3 4z" fill="#444"/></svg>
        <input type="text" placeholder="键入命令" aria-label="命令">
        <svg width="8" height="5"><path d="M0 5h8L4 0z" fill="#222"/></svg>
      </div>
    </div>
  </main>

  <footer class="status">
    <nav class="layouts">
      <button class="lt on">模型</button><button class="lt">布局1</button><button class="lt">布局2</button><button class="lt plus" aria-label="新布局"><svg width="9" height="9"><path d="M4.500 0v9M0 4.500h9" stroke="#c8c8c8" stroke-width="2"/></svg></button>
    </nav>
    <div class="cells">
      <div class="cell dims">DIMSCALE:&lt;1:33&gt; DIMSTY:&lt;ISO-25&gt; STYLE:&lt;Standard&gt;</div>
      <div class="cell w29"><button class="model">模型</button></div>
      <div class="cell w65"><button aria-label="栅格"><svg width="14" height="14"><use href="#gridi"/></svg></button><button aria-label="捕捉"><svg width="16" height="16"><use href="#snapi"/></svg></button><svg width="7" height="5"><use href="#down"/></svg></div>
      <div class="cell w26"><button aria-label="动态输入"><svg width="18" height="16"><use href="#dyn"/></svg></button></div>
      <div class="cell w106"><button aria-label="正交"><svg width="16" height="16"><use href="#ortho"/></svg></button><button aria-label="极轴"><svg width="16" height="16"><use href="#polar"/></svg></button><svg width="7" height="5"><use href="#down"/></svg><button aria-label="等轴测"><svg width="16" height="16"><use href="#iso"/></svg></button><svg width="7" height="5"><use href="#down"/></svg></div>
      <div class="cell w62"><button aria-label="对象捕捉追踪"><svg width="16" height="16"><use href="#angle"/></svg></button><button aria-label="对象捕捉"><svg width="17" height="17"><use href="#osnap"/></svg></button><svg width="7" height="5"><use href="#down"/></svg></div>
      <div class="cell w108"><button class="blue" aria-label="注释可见性"><svg width="16" height="16"><use href="#annov"/></svg></button><button aria-label="自动缩放"><svg width="16" height="16"><use href="#annoa"/></svg></button><button aria-label="注释比例图标"><svg width="16" height="16"><use href="#anno"/></svg></button><button class="ratio">1:1 <svg width="7" height="5"><use href="#down"/></svg></button></div>
      <div class="cell w41"><button aria-label="工作空间"><svg width="14" height="14"><use href="#gear"/></svg></button><svg width="7" height="5"><use href="#down"/></svg></div>
      <div class="cell w26"><button aria-label="注释监视器"><svg width="16" height="16"><use href="#plus"/></svg></button></div>
      <div class="cell w27"><button aria-label="隔离对象"><svg width="16" height="16"><use href="#iso2"/></svg></button></div>
      <div class="cell w27"><button aria-label="硬件加速"><svg width="18" height="18"><use href="#hw"/></svg></button></div>
      <div class="cell w26"><button aria-label="受信任"><svg width="16" height="18"><use href="#trust"/></svg></button></div>
      <div class="cell w50"><button aria-label="全屏显示"><svg width="16" height="14"><use href="#full"/></svg></button><button aria-label="自定义"><svg width="16" height="14"><use href="#burger"/></svg></button></div>
    </div>
  </footer>

  <aside class="props">
    <i class="pgrip"></i>
    <div class="pmain">
      <div class="combo"><select aria-label="对象类型"><option>直线</option></select><span class="psep"><svg width="6" height="4"><use href="#down"/></svg></span></div>
      <table>
        <tr><th>颜色</th><td><i class="chip"></i>ByLayer</td></tr>
        <tr><th>图层</th><td>粗实线</td></tr>
        <tr><th>线型</th><td><i class="rule"></i>ByLayer</td></tr>
        <tr><th>长度</th><td class="off">82823.6486</td></tr>
      </table>
    </div>
    <button class="cui" aria-label="CUI"><svg width="16" height="8"><path d="M.500.500h15v7H.500z" fill="#ddd" stroke="#333"/><path d="M1 1h9v2H1z" fill="#777"/></svg><span>CUI</span></button>
    <div class="pctl"><button aria-label="关闭"><svg width="8" height="8"><path d="m1 0 6 8M7 0 1 8" stroke="#fff" stroke-width="1.500"/></svg></button><button aria-label="选项"><svg width="8" height="8"><path d="M0 1h8M0 4h8" stroke="#eee"/><path d="M3 5h4L5 8z" fill="#eee"/></svg></button></div>
  </aside>

  <div class="ime">
    <svg class="sogou" width="28" height="28"><g transform="rotate(-10 14 14)"><rect x="3" y="3" width="23" height="23" rx="3" fill="#e4572c"/><path d="M21 8c-4-2-12-2-12 2 0 5 12 2 12 6 0 4-8 5-13 2" fill="none" stroke="#fff" stroke-width="4"/></g></svg>
    <button>中</button>
    <svg width="14" height="14"><circle cx="4" cy="4" r="2" fill="none" stroke="#2b76b9" stroke-width="1.500"/><path d="M9 7h3v3l-2 4H8l1-4z" fill="#2b76b9"/></svg>
    <svg width="16" height="16" fill="none" stroke="#2b76b9" stroke-width="1.500"><circle cx="8" cy="8" r="7"/><path d="M5.500 5v2M10.500 5v2M4 9c1 4 7 4 8 0"/></svg>
    <svg width="14" height="16"><rect x="4" width="6" height="10" rx="3" fill="#2b76b9"/><path d="M2 7c0 7 10 7 10 0M7 12v3M4 15h6" fill="none" stroke="#2b76b9" stroke-width="1.500"/></svg>
    <svg width="16" height="13"><rect width="16" height="13" rx="2" fill="#2b76b9"/><path d="M2 3.500h12M2 6.500h12" stroke="#fff" stroke-width="1.500" stroke-dasharray="2 1"/><path d="M4 10h8" stroke="#fff" stroke-width="1.500"/></svg>
    <svg width="16" height="16"><circle cx="6" cy="4" r="3" fill="#b0b8c4"/><path d="M0 14c0-8 9-8 10-2v2z" fill="#b0b8c4"/><path d="M9 9h6v6H9z" fill="#eee" stroke="#9aa4b4"/><path d="M11 11h2v3" fill="none" stroke="#9aa4b4"/></svg>
    <svg width="16" height="14"><path d="m4 0 4 2 4-2 4 4-3 3-1-1v8H4V6L3 7 0 4z" fill="#2b76b9"/></svg>
    <svg width="14" height="14"><path d="M0 0h6v6H0zM0 8h6v6H0zM8 8h6v6H8z" fill="#2b76b9"/><path d="M9 1h4v4H9z" fill="none" stroke="#2b76b9" stroke-width="1.500"/></svg>
  </div>

  <div class="mark">
    <svg width="72" height="54" fill="none" stroke="#c0c0c0" stroke-width="2">
      <path d="M2 8c8 2 4 10 6 22 0 8 2 13 8 14M14 44c-3-4-3-6-3-12V16c0-4 3-7 7-7l5-6 5 6h18l5-6 5 6c4 0 7 3 7 7v22c0 7-2 10-8 10H20c-4 0-6-1-6-4z"/>
      <path d="M26 14h22M22 20h30M12 26h6M12 32h6M12 38h6M57 26h6M57 32h6M57 38h6"/><path d="M32 26v12l11-6z" fill="#c0c0c0"/>
    </svg><span>虎课网</span>
  </div>
</div>
</body>
</html>
```
FILE: styles.css
```css
* { box-sizing: border-box; }
body {
  margin: 0;
  background: #101010;
  color: #e2e2e2;
  font: 12px/16px "Open Sans", "Noto Sans CJK SC", sans-serif;
}
button, input, select { font: inherit; color: inherit; }
button { border: 0; padding: 0; margin: 0; background: none; display: flex; align-items: center; justify-content: center; white-space: nowrap; }
svg { flex: none; display: block; }
i { display: block; flex: none; }
p, h1 { margin: 0; font-weight: 400; }
.sprite { position: absolute; width: 0; height: 0; }

.app { position: relative; display: flex; flex-direction: column; min-height: 100vh; padding: 18px 2px 18px 1px; overflow: hidden; }

/* title bar and ribbon tabs */
.top { display: grid; grid-template-columns: 39px 1fr; grid-template-rows: 24px 21px; background: #575757; }
.appbtn { grid-row: 1 / 3; height: 41px; width: 38px; gap: 4px; align-self: start; background: linear-gradient(#c4c4c4, #7c7c7c); border: 1px solid #111; }
.titlebar { display: flex; background: #ececec; border-bottom: 1px solid #333; }
.qat { display: flex; align-items: center; width: 214px; padding-left: 4px; background: linear-gradient(#7c7c7c, #585858); }
.qat button { width: 24px; height: 23px; }
.qat button.slim { width: 13px; }
.title { flex: 1; display: flex; gap: 15px; justify-content: center; font-size: 13px; line-height: 23px; color: #333; }
.info { display: flex; align-items: center; width: 445px; background: linear-gradient(#7c7c7c, #585858); }
.expand { width: 14px; height: 23px; }
.search { width: 180px; height: 21px; border: 1px solid #3c3c3c; background: #6f6f6f; padding: 0 4px; outline: 0; }
.search::placeholder { color: #b4b4b4; font-style: italic; opacity: 1; }
.i24 { width: 24px; height: 23px; }
.login { width: 120px; gap: 5px; padding-left: 4px; justify-content: flex-start; }
.login .end { margin-left: auto; margin-right: 2px; }
.help { margin-left: 16px; margin-right: 6px; }
.a1 { margin-left: 2px; }
.winctl { display: flex; width: 162px; padding-left: 24px; }
.winctl button { width: 46px; }
.tabs { display: flex; align-items: flex-end; padding-left: 3px; border-bottom: 1px solid #333; }
.tabs button { padding: 2px 10px 0; height: 18px; color: #c0c0c0; }
.tabs .on { background: linear-gradient(#747474, #616161); color: #f0f0f0; border: 1px solid #444; border-bottom: 0; padding: 1px 9px 0; }
.tabs .mini { gap: 6px; padding-left: 28px; }

/* ribbon panels */
.ribbon { display: flex; height: 99px; background: linear-gradient(#555, #464646); border-bottom: 1px solid #999; }
.panel { display: flex; flex-direction: column; flex: none; background: #606060; border-right: 1px solid #474747; }
.panel .body { display: flex; height: 79px; padding: 5px 2px 0; }
.ptitle { height: 19px; padding-top: 1px; background: linear-gradient(#515151, #5a5a5a); gap: 7px; }
.launch { margin-left: auto; margin-right: 4px; }
.p-view .ptitle { padding-left: 3px; }
.p-prop .ptitle { padding-left: 96px; }
.p-draw { width: 209px; }
.p-modify { width: 227px; }
.p-anno { width: 156px; }
.p-layer { width: 252px; }
.p-block { width: 134px; }
.p-prop { width: 245px; }
.p-util { width: 75px; }
.p-clip { width: 76px; }
.p-view { width: 61px; }
.panel.p-draw .body { padding-left: 0; }
.panel.p-modify .body, .panel.p-clip .body { padding-left: 4px; }
.panel.p-view .body { padding-left: 8px; }
.big { flex-direction: column; justify-content: flex-start; width: 40px; padding-top: 2px; line-height: 17px; }
.big > svg:first-child, .bigA { margin-bottom: 6px; }
.big.wide { width: 44px; }
.dd { margin-top: 3px; }
.bigA { font: 36px/30px Roboto, sans-serif; }
.stack { display: flex; flex-direction: column; }
.grow { flex: 1; }
.sm { height: 24px; gap: 5px; padding-left: 3px; justify-content: flex-start; }
.arr { margin-left: 6px; }
.c59 { width: 59px; }
.c74 { width: 74px; }
.p-draw .stack, .p-util .stack, .p-clip .stack { padding-left: 2px; }
.combo { display: flex; align-items: center; height: 22px; margin: 0 0 2px; padding: 0 2px 0 6px; gap: 5px; border: 1px solid #363636; background: linear-gradient(#5a5a5a, #6c6c6c); }
.combo select { flex: 1; min-width: 0; appearance: none; border: 0; background: none; padding: 1px 0 0; outline: 0; }
.swatch { width: 14px; height: 14px; background: #ececec; border: 1px solid #222; }
.big-sw { width: 16px; height: 16px; border-color: #999; margin: 0 6px; }
.rule { width: 60px; height: 1px; background: #f0f0f0; }
.thick { height: 3px; }
.lrow { display: flex; height: 24px; padding-left: 2px; }
.lrow button { width: 24px; }
.lrow .txt { width: auto; gap: 5px; padding-left: 2px; }
.prow { display: flex; align-items: center; height: 24px; gap: 2px; padding-left: 2px; }
.prow .combo { flex: 1; gap: 3px; margin: 0; }
.edge { margin-left: auto; width: 6px; height: 78px; background: #26324e; }

/* open drawings */
.docs { display: flex; align-items: flex-end; height: 29px; background: #404040; border-bottom: 4px solid #606060; padding-left: 17px; }
.doc { height: 22px; justify-content: flex-start; padding: 2px 0 0 12px; background: #535353; color: #b0b0b0; clip-path: polygon(0 100%, 5px 4px, 10px 0, calc(100% - 10px) 0, calc(100% - 5px) 4px, 100% 100%); }
.start { width: 123px; }
.cur { width: 130px; justify-content: space-between; padding-right: 18px; background: #686868; color: #eee; }
.add { width: 24px; height: 16px; padding: 0 0 0 8px; margin: 0 0 3px 1px; }

/* drawing area */
.work { position: relative; flex: 1; display: flex; flex-direction: column; justify-content: flex-end; }
.drawing { position: absolute; inset: 0; }
.note { position: absolute; left: 1121px; top: 401px; color: #f00; font: 500 27px/40px "Noto Sans CJK SC", sans-serif; white-space: nowrap; }
.grouppal { position: absolute; left: 0; top: -8px; display: flex; width: 77px; background: #5e5e5e; }
.gmain { flex: 1; }
.gbody { display: flex; height: 79px; padding: 5px 1px 0; }
.gbig { flex-direction: column; width: 34px; justify-content: flex-start; padding-top: 7px; gap: 5px; }
.gcol { display: flex; flex-direction: column; gap: 2px; padding-left: 3px; }
.gcol button { width: 24px; height: 22px; }
.gcol .sel { background: #5b84bd; border: 1px solid #2a3f66; }
.gtitle { height: 17px; line-height: 18px; text-align: center; background: #535353; }
.gside { width: 13px; padding-right: 3px; background: #4e4e4e; }
.docctl { position: absolute; right: 13px; top: 5px; display: flex; }
.docctl button { width: 20px; height: 20px; }
.navbar { position: absolute; right: 11px; top: 27px; width: 32px; background: #464646; border-radius: 5px; }
.meter { position: absolute; left: 0; top: 576px; width: 6px; height: 48px; background: #c8403e; border-top: 10px solid #4c4c4c; border-right: 2px solid #4c4c4c; border-radius: 2px; }
.scroll { position: absolute; right: 0; top: 0; bottom: 0; width: 7px; background: linear-gradient(#9cc8e4, #b4dcf4 90px, #98c6e4 92px, #a0cbe6); }
.history { position: relative; display: flex; flex-direction: column; align-items: flex-start; gap: 5px; padding: 0 0 4px 57px; }
.history p { padding: 0 2px; height: 15px; font: 13px/15px "Noto Sans CJK SC", sans-serif; background: #5c5c5c; border-radius: 2px; white-space: pre; }
.history .dim { background: #484848; color: #b8b8b8; }
.history span { font: 12px/15px "Liberation Mono", monospace; }
.cmd { position: relative; display: flex; align-items: center; height: 26px; margin: 0 147px 1px 0; background: #4c4c4c; }
.grip { width: 6px; height: 18px; margin-right: 5px; background: repeating-linear-gradient(#8c8c8c 0 1px, transparent 1px 3px); }
.cx { width: 12px; }
.cw { width: 28px; padding-left: 6px; }
.cline { flex: 1; display: flex; align-items: center; gap: 4px; height: 26px; padding: 0 4px 0 5px; background: #ababab; border-radius: 2px; }
.cline input { flex: 1; border: 0; background: none; outline: 0; font-size: 13px; padding: 0 0 0 3px; color: #333; }
.cline input::placeholder { color: #666; font-style: italic; opacity: 1; }

/* status bar */
.status { display: flex; justify-content: space-between; height: 27px; background: #404040; border-top: 1px solid #555; }
.layouts { display: flex; align-items: flex-start; padding-left: 7px; }
.lt { width: 54px; height: 17px; background: #545454; color: #b4b4b4; clip-path: polygon(0 0, 100% 0, calc(100% - 7px) 90%, calc(100% - 10px) 100%, 10px 100%, 7px 90%); }
.lt.on { width: 49px; background: #7a7a7a; color: #fff; font-weight: 700; }
.lt.plus { width: 24px; margin-left: 3px; clip-path: polygon(4px 0, 100% 0, 18px 100%, 0 100%); }
.cells { display: flex; border: 1px solid #848484; border-right: 0; background: #555; }
.cell { display: flex; align-items: center; justify-content: space-evenly; border-right: 1px solid #848484; color: #ccc; }
.dims { width: 321px; white-space: nowrap; color: #e4e4e4; }
.model { font-weight: 700; color: #fff; }
.blue { color: #3c93ea; }
.ratio { gap: 2px; color: #eee; }
.w26 { width: 26px; }
.w27 { width: 27px; }
.w29 { width: 29px; }
.w41 { width: 41px; }
.w50 { width: 50px; }
.w62 { width: 62px; }
.w65 { width: 65px; }
.w106 { width: 106px; }
.w108 { width: 108px; }

/* quick properties palette */
.props { position: absolute; right: 93px; top: 62px; display: flex; width: 333px; height: 119px; padding: 3px 4px; background: #5b5b5b; }
.pgrip { width: 8px; height: 27px; margin-right: 6px; background: repeating-linear-gradient(#ccc 0 2px, #333 2px 5px); }
.pmain { width: 297px; }
.pmain .combo { width: 269px; margin: 0 0 5px; padding-left: 2px; }
.psep { display: flex; align-items: center; justify-content: center; width: 12px; height: 20px; border-left: 1px solid #444; }
.props table { width: 100%; border-collapse: collapse; background: #606060; }
.props th, .props td { height: 21px; padding: 0 0 0 4px; border: 1px solid #686868; text-align: left; font-weight: 400; line-height: 18px; }
.props th { width: 108px; }
.props td > i { display: inline-block; vertical-align: middle; margin: 0 6px 0 3px; }
.chip { width: 10px; height: 10px; background: #eee; border: 1px solid #222; }
.props .off { color: #b0b0b0; }
.cui { position: absolute; left: 295px; top: 6px; flex-direction: column; color: #fff; background: #333; }
.cui span { font: 700 8px/8px "Liberation Sans", sans-serif; }
.pctl { display: flex; flex-direction: column; gap: 6px; margin: 2px 0 0 6px; }

/* input method bar */
.ime { position: absolute; left: 690px; top: 1032px; display: flex; align-items: center; justify-content: space-between; width: 210px; height: 29px; padding: 0 5px 0 2px; background: linear-gradient(#f0f0f0, #f0f0f0) 2px 4px / 207px 22px no-repeat #111; }
.ime button { color: #2b76b9; font-weight: 700; font-size: 16px; }

/* brand mark */
.mark { position: absolute; right: 18px; top: 13px; display: flex; opacity: .7; pointer-events: none; }
.mark svg { margin: 5px 0 0; }
.mark span { font: 500 47px/54px "Noto Sans CJK SC", sans-serif; color: transparent; -webkit-text-stroke: 2px #b4b4b4; }
```
